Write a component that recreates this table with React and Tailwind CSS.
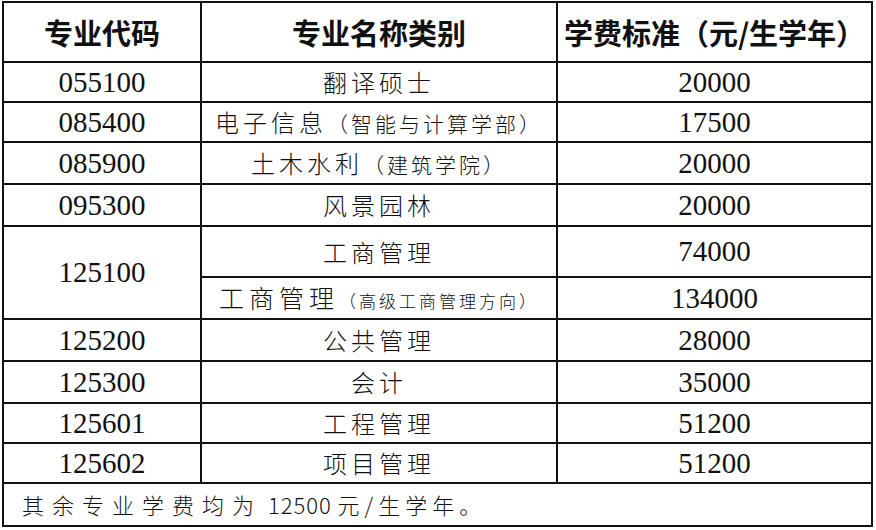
const rows = [
  { code: "055100", name: <Cn main="翻译硕士" />, fee: "20000" },
  { code: "085400", name: <Cn main="电子信息" sub="（智能与计算学部）" />, fee: "17500" },
  { code: "085900", name: <Cn main="土木水利" sub="（建筑学院）" />, fee: "20000" },
  { code: "095300", name: <Cn main="风景园林" />, fee: "20000" },
];

const rowsAfter = [
  { code: "125200", name: <Cn main="公共管理" />, fee: "28000" },
  { code: "125300", name: <Cn main="会计" />, fee: "35000" },
  { code: "125601", name: <Cn main="工程管理" />, fee: "51200" },
  { code: "125602", name: <Cn main="项目管理" />, fee: "51200" },
];

function Cn({ main, sub }) {
  return (
    <span className="whitespace-nowrap [font-family:'Noto_Sans_CJK_SC',sans-serif] font-light text-[#111]">
      <span className="text-[24px] tracking-[4px]">{main}</span>
      {sub && <span className="text-[21px] tracking-[3px]">{sub}</span>}
    </span>
  );
}

function Cell({ children, className = "" }) {
  return (
    <div className={"bg-white flex items-center justify-center " + className}>
      {children}
    </div>
  );
}

function Num({ children }) {
  return (
    <span className="[font-family:'Liberation_Serif',serif] text-[29px] leading-none text-[#111]">
      {children}
    </span>
  );
}

function Head({ children }) {
  return (
    <span className="[font-family:'Noto_Sans_CJK_SC',sans-serif] font-bold text-[29px] leading-none text-[#111] whitespace-nowrap">
      {children}
    </span>
  );
}

export default function App() {
  return (
    <div className="w-[876px] h-[530px] bg-white pt-[1px] pl-[2px]">
      <div className="grid w-[871px] grid-cols-[196px_354px_313px] grid-rows-[58px_38px_38px_40px_40px_49px_40px_40px_40px_38px_38px_41px] gap-[2px] bg-[#111] p-[2px]">
        <Cell>
          <Head>专业代码</Head>
        </Cell>
        <Cell>
          <Head>专业名称类别</Head>
        </Cell>
        <Cell>
          <Head>学费标准（元/生学年）</Head>
        </Cell>

        {rows.map((r) => (
          <Row key={r.code} {...r} />
        ))}

        <Cell className="row-span-2">
          <Num>125100</Num>
        </Cell>
        <Cell>
          <Cn main="工商管理" />
        </Cell>
        <Cell>
          <Num>74000</Num>
        </Cell>
        <Cell>
          <span className="whitespace-nowrap [font-family:'Noto_Sans_CJK_SC',sans-serif] font-light text-[#111]">
            <span className="text-[25px] tracking-[5px]">工商管理</span>
            <span className="text-[17px] tracking-[3px]">（高级工商管理方向）</span>
          </span>
        </Cell>
        <Cell>
          <Num>134000</Num>
        </Cell>

        {rowsAfter.map((r) => (
          <Row key={r.code} {...r} />
        ))}

        <div className="col-span-3 bg-white flex items-center pl-[18px]">
          <span className="whitespace-nowrap [font-family:'Noto_Sans_CJK_SC',sans-serif] font-light text-[22px] text-[#111]">
            <span className="tracking-[8px]">其余专业学费均为</span>
            <span className="tracking-[1px]"> 12500 </span>
            <span className="tracking-[5px]">元/生学年。</span>
          </span>
        </div>
      </div>
    </div>
  );
}

function Row({ code, name, fee }) {
  return (
    <>
      <Cell>
        <Num>{code}</Num>
      </Cell>
      <Cell>{name}</Cell>
      <Cell>
        <Num>{fee}</Num>
      </Cell>
    </>
  );
}
